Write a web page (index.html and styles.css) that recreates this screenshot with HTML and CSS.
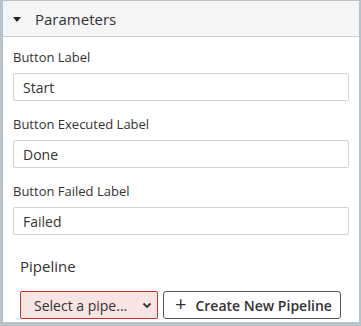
FILE: index.html
```html
<!DOCTYPE html>
<html lang="en">
<head>
<meta charset="UTF-8">
<meta name="viewport" content="width=device-width, initial-scale=1.0">
<title>Parameters</title>
<link rel="stylesheet" href="styles.css">
</head>
<body>
<div class="panel">
<div class="panel-header">
<span class="caret"></span>
<span class="panel-title">Parameters</span>
</div>
<div class="panel-body">
<div class="field">
<label>Button Label</label>
<input type="text" value="Start">
</div>
<div class="field">
<label>Button Executed Label</label>
<input type="text" value="Done">
</div>
<div class="field">
<label>Button Failed Label</label>
<input type="text" value="Failed">
</div>
<div class="pipeline">
<h4>Pipeline</h4>
<div class="pipeline-row">
<div class="select-box">
<span>Select a pipe...</span>
<svg width="10" height="7" viewBox="0 0 10 7"><path d="M1.5 1.5 L5 5 L8.5 1.5" fill="none" stroke="#333" stroke-width="1.8"/></svg>
</div>
<button class="create-button"><span class="plus">+</span> Create New Pipeline</button>
</div>
</div>
</div>
</div>
</body>
</html>
```

FILE: styles.css
```css
/* Reset styles */
* {
margin: 0;
padding: 0;
box-sizing: border-box;
font-family: "Open Sans", Arial, sans-serif;
}
body {
background-color: #b7c2cb;
width: 361px;
height: 326px;
overflow: hidden;
}
/* Panel */
.panel {
margin: 1px 2px 0 3px;
height: 321px;
background-color: #fff;
}
.panel-header {
height: 36px;
background-color: #f5f5f5;
border-bottom: 1px solid #cfcfcf;
display: flex;
align-items: center;
padding-left: 10px;
}
.caret {
width: 0;
height: 0;
border-left: 4px solid transparent;
border-right: 4px solid transparent;
border-top: 5px solid #222;
margin-top: 2px;
margin-right: 14px;
}
.panel-title {
font-size: 15px;
color: #333;
}
.panel-body {
padding: 11px 10px 0 10px;
}
/* Fields */
.field {
margin-bottom: 14px;
}
.field label {
display: block;
font-size: 13px;
color: #333;
line-height: 18px;
margin-bottom: 7px;
}
.field input {
width: 100%;
height: 28px;
border: 1px solid #d2d2d2;
border-radius: 2px;
padding: 0 9px;
font-size: 14px;
color: #333;
background-color: #fff;
}
/* Pipeline */
.pipeline {
padding: 7px 7px 0 7px;
}
.pipeline h4 {
font-weight: normal;
font-size: 15px;
color: #333;
line-height: 20px;
margin-bottom: 15px;
}
.pipeline-row {
display: flex;
gap: 5px;
}
.select-box {
width: 138px;
height: 28px;
border: 1px solid #c9302c;
border-radius: 2px;
background-color: #f9e4e4;
display: flex;
align-items: center;
justify-content: space-between;
padding: 0 5px 0 13px;
font-size: 14px;
color: #333;
}
.create-button {
height: 28px;
width: 178px;
border: 1px solid #555;
border-radius: 3px;
background-color: #fff;
color: #333;
font-size: 14px;
font-weight: 600;
display: flex;
align-items: center;
padding-left: 11px;
gap: 9px;
}
.plus {
font-weight: normal;
font-size: 20px;
line-height: 1;
margin-top: -2px;
}
```
